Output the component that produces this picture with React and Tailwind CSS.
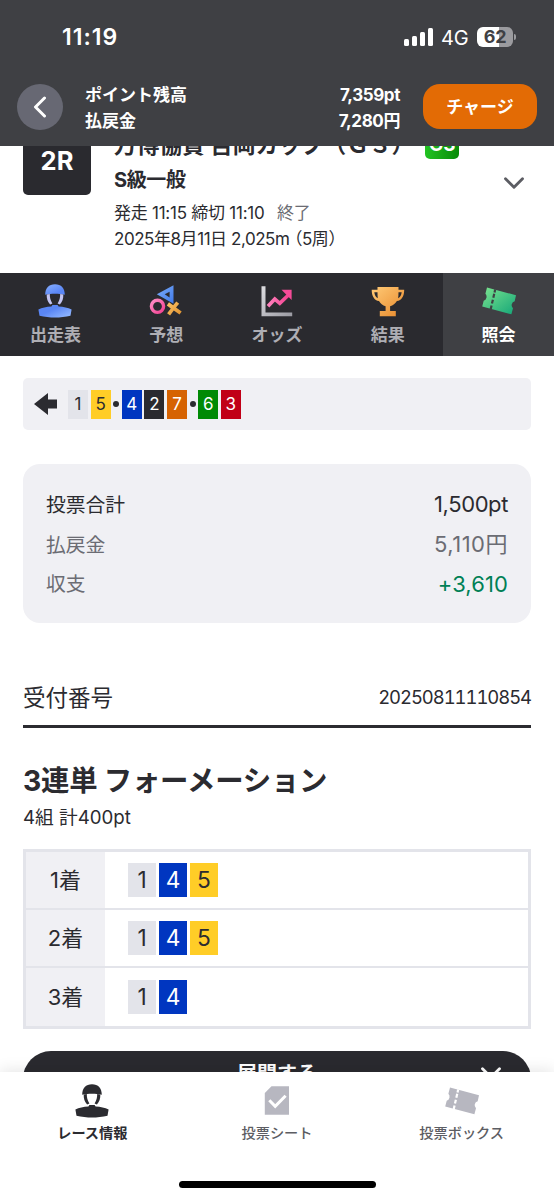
import { ChevronDown } from "lucide-react";

const chipColors = {
  1: "bg-[#e3e4ea] text-[#2b2b30]",
  2: "bg-[#2a2a2f] text-white",
  3: "bg-[#c10017] text-white",
  4: "bg-[#0036c0] text-white",
  5: "bg-[#ffcd27] text-[#2b2b30]",
  6: "bg-[#008a05] text-white",
  7: "bg-[#d66302] text-white",
};

const finishOrder = [1, 5, "dot", 4, 2, 7, "dot", 6, 3];

const formation = [
  { place: "1着", cars: [1, 4, 5] },
  { place: "2着", cars: [1, 4, 5] },
  { place: "3着", cars: [1, 4] },
];

function RiderShape({ body, straps }) {
  return (
    <>
      <path d="M7.2 11.800C7.200 5 10.800 1.200 17 1.200s9.800 3.800 9.800 10.600c-3.400-1-6.200-1-9.800-1s-6.400 0-9.800 1Z" fill={body} />
      <path d="M8.700 11.500 11.800 11c0 3.600.5 6.200 2.600 9.400l-2.300 1C9.600 18.600 8.500 15.500 8.700 11.500ZM25.300 11.500 22.200 11c0 3.600-.5 6.200-2.600 9.400l2.300 1c2.500-2.800 3.600-5.900 3.400-9.900Z" fill={straps} />
      <path d="M.4 26.400C4 24.600 8.500 24 13.400 23.600l1-1.600h5.200l1 1.600c4.900.4 9.400 1 13 2.800l-1.100 6.300C27.500 34.100 22 34.400 17 34.400s-10.500-.3-15.500-1.700L.4 26.400Z" fill={body} />
    </>
  );
}

function RiderIcon() {
  return (
    <svg width="34" height="35" viewBox="0 0 34 35">
      <defs>
        <linearGradient id="rider" gradientUnits="userSpaceOnUse" x1="8" y1="0" x2="24" y2="35">
          <stop offset="0" stopColor="#8bb2ff" />
          <stop offset="0.35" stopColor="#5a86f5" />
          <stop offset="0.7" stopColor="#5a86f5" />
          <stop offset="1" stopColor="#8bb2ff" />
        </linearGradient>
      </defs>
      <RiderShape body="url(#rider)" straps="#c3c4f2" />
    </svg>
  );
}

function PredictIcon() {
  return (
    <svg width="34" height="35" viewBox="0 0 34 35">
      <defs>
        <linearGradient id="tri" x1="0" y1="0" x2="1" y2="1">
          <stop offset="0" stopColor="#7fb0fb" />
          <stop offset="1" stopColor="#3f78e8" />
        </linearGradient>
        <linearGradient id="ring" x1="0" y1="0" x2="1" y2="1">
          <stop offset="0" stopColor="#ff8fc6" />
          <stop offset="1" stopColor="#f23f90" />
        </linearGradient>
        <linearGradient id="cross" x1="0" y1="0" x2="1" y2="1">
          <stop offset="0" stopColor="#ffc66a" />
          <stop offset="1" stopColor="#dd8f2c" />
        </linearGradient>
      </defs>
      <path d="M24.500 2.200v18.600L7.800 11.200 24.500 2.200ZM20.600 8.700l-4.900 2.500 4.900 3.200V8.700Z" fill="url(#tri)" fillRule="evenodd" />
      <circle cx="8.500" cy="23.300" r="6.100" fill="none" stroke="url(#ring)" strokeWidth="3.400" />
      <path d="m20 19.200 4.100 3 3.200-3.800 2.900 2.400-3.200 3.800 5.700 3.900-2.200 3-5.700-3.900-3.700 5-3-2.300 3.700-4.900-4-2.900 2.200-3.300Z" fill="url(#cross)" />
    </svg>
  );
}

function OddsIcon() {
  return (
    <svg width="34" height="35" viewBox="0 0 34 35">
      <defs>
        <linearGradient id="axis" x1="0" y1="0" x2="1" y2="1">
          <stop offset="0" stopColor="#dedee2" />
          <stop offset="1" stopColor="#9a9aa2" />
        </linearGradient>
        <linearGradient id="line" x1="0" y1="0" x2="1" y2="0">
          <stop offset="0" stopColor="#ff82bd" />
          <stop offset="1" stopColor="#f2408f" />
        </linearGradient>
      </defs>
      <path d="M1.500 3.200h4v26.200h26.700v3.800H1.500Z" fill="url(#axis)" />
      <path d="m8 23.300 6.800-7.200 5 4.200 9.200-8.800" fill="none" stroke="url(#line)" strokeWidth="3.700" />
      <path d="M21.500 6.800h10.100V17Z" fill="#f54b98" />
    </svg>
  );
}

function TrophyIcon() {
  return (
    <svg width="34" height="35" viewBox="0 0 34 35">
      <defs>
        <linearGradient id="cup" x1="0" y1="0" x2="1" y2="1">
          <stop offset="0" stopColor="#ffca77" />
          <stop offset="1" stopColor="#e8892b" />
        </linearGradient>
      </defs>
      <path d="M6.500 4h21v2.700h5.700c0 6.500-2.600 10.600-7.300 11.400-1.500 2.700-3.900 4.500-6.800 5.200v4.700h5.700v5.200H8.800v-5.200h5.800v-4.700c-2.900-.7-5.200-2.500-6.600-5.200C3.400 17.300.7 13.200.7 6.700h5.800V4Zm0 5.200H3.300c.4 3 1.500 5 3.500 6-.2-1.800-.3-3.800-.3-6Zm21 0c0 2.200-.1 4.200-.4 6 2.100-1 3.200-3 3.600-6h-3.200Z" fill="url(#cup)" fillRule="evenodd" />
    </svg>
  );
}

function TicketIcon({ fill, gap }) {
  return (
    <svg width="34" height="35" viewBox="0 0 34 35">
      <defs>
        <linearGradient id="ticket" x1="0" y1="0" x2="1" y2="1">
          <stop offset="0" stopColor="#7be38f" />
          <stop offset="1" stopColor="#14a678" />
        </linearGradient>
      </defs>
      <path d="m5 4.600 29 7.600-1.300 6a4.100 4.100 0 0 0-1.700 7l-1.600 6.100L.2 23.600l1.500-5.800a4.300 4.300 0 0 0 1.700-7L5 4.600Z" fill={fill} />
      <path d="M13.200 6.500 8.700 26.200" fill="none" stroke={gap} strokeWidth="2.200" strokeDasharray="3 1.400 4 2 4 2 6" />
    </svg>
  );
}

function SheetIcon() {
  return (
    <svg width="34" height="35" viewBox="0 0 34 35">
      <path d="M11.500 3.200H29v28.600H4.800V10L11.500 3.200Z" fill="#b7b7c0" />
      <path d="m9.300 17.300 5.900 6 10.400-10.600" fill="none" stroke="#fff" strokeWidth="3" />
    </svg>
  );
}

const tabs = [
  { label: "出走表", icon: <RiderIcon /> },
  { label: "予想", icon: <PredictIcon /> },
  { label: "オッズ", icon: <OddsIcon /> },
  { label: "結果", icon: <TrophyIcon /> },
  { label: "照会", icon: <TicketIcon fill="url(#ticket)" gap="#3f4044" />, active: true },
];

function StatusBar() {
  return (
    <div className="flex h-[74px] items-center justify-between pr-[38px] pl-[62px]">
      <span className="pt-px text-[23px] font-semibold tracking-[1px]">11:19</span>
      <div className="flex items-center">
        <div className="flex h-[18px] items-end gap-[3px]">
          <i className="h-[7px] w-[5px] rounded-[1.500px] bg-white" />
          <i className="h-[10px] w-[5px] rounded-[1.500px] bg-white" />
          <i className="h-[14px] w-[5px] rounded-[1.500px] bg-white" />
          <i className="h-[18px] w-[5px] rounded-[1.500px] bg-white" />
        </div>
        <span className="ml-[8px] w-[28px] pt-[2px] text-[20px] tracking-[-0.2px]">4G</span>
        <div className="ml-[8px] flex h-5 w-9 items-center justify-center rounded-[6px] bg-linear-to-r from-white from-62% to-[#9b9b9f] to-62% text-[18px] leading-none font-bold tracking-[-0.3px] text-[#3f4044]">
          62
        </div>
        <i className="ml-px h-[6px] w-[2px] rounded-r-full bg-[#9b9b9f]" />
      </div>
    </div>
  );
}

function Header() {
  return (
    <header className="h-[146px] shrink-0 bg-[#3f4044] text-white">
      <StatusBar />
      <div className="flex h-[65px] items-center pr-[17px] pl-[17px]">
        <button className="flex size-[46px] items-center justify-center rounded-full bg-[#676873]">
          <svg width="14" height="22" viewBox="0 0 14 22" fill="none" stroke="currentColor" strokeWidth="3" strokeLinecap="round" strokeLinejoin="round">
            <path d="M11.500 2 2.500 11l9 9" />
          </svg>
        </button>
        <div className="ml-[22px] flex-1 pt-[2px] text-[17px] leading-[26px] font-bold">
          <div className="flex justify-between">
            <span>ポイント残高</span>
            <span className="tracking-[-0.4px]">7,359pt</span>
          </div>
          <div className="flex justify-between">
            <span>払戻金</span>
            <span className="tracking-[-0.4px]">7,280円</span>
          </div>
        </div>
        <button className="ml-[23px] h-[45px] w-[114px] rounded-[17px] bg-[#e36b05] pt-[2px] text-[17px] font-bold">
          チャージ
        </button>
      </div>
    </header>
  );
}

function RaceInfo() {
  return (
    <section className="flex h-[127px] shrink-0 px-[23px]">
      <div className="-mt-[19px] flex h-[68px] w-[68px] shrink-0 items-center justify-center rounded-[5px] bg-[#2a2a2f] pt-px text-[25.500px] font-bold text-white">
        2R
      </div>
      <div className="-mt-[18px] ml-[23px] flex-1 whitespace-nowrap text-[#2b2b30]">
        <div className="flex h-[34px] items-center">
          <h1 className="text-[22.700px] leading-[34px] font-bold">万博協賛 吉岡カップ（Ｇ３）</h1>
          <span className="ml-[11px] flex h-[28px] w-[34px] items-center justify-center rounded-[5px] bg-linear-to-r from-[#22c322] to-[#078a07] pt-px text-[19px] font-bold text-white">G3</span>
        </div>
        <div className="h-[34px] pt-px text-[20px] leading-[34px] font-bold tracking-[-0.4px]">S級一般</div>
        <div className="mt-[4px] text-[17px] leading-[26px] tracking-[-0.25px]">
          発走 11:15 締切 11:10 <span className="ml-[8px] text-[#6b6c73]">終了</span>
        </div>
        <div className="text-[17px] leading-[26px] tracking-[-0.45px]">
          2025年8月11日 2,025m<span className="-ml-[4px]">（5周）</span>
        </div>
      </div>
      <ChevronDown size={34} strokeWidth={2} className="mt-[20px] -ml-[34px] shrink-0 text-[#5c5d63]" />
    </section>
  );
}

function Tabs() {
  return (
    <nav className="grid h-[83px] shrink-0 grid-cols-5 bg-[#2a2a2f]">
      {tabs.map((tab) => (
        <div
          key={tab.label}
          className={
            tab.active
              ? "flex flex-col items-center bg-[#3f4044] pt-[10px] text-white"
              : "flex flex-col items-center pt-[10px] text-[#aeaeb4]"
          }
        >
          {tab.icon}
          <span className="mt-[4px] text-[17px] leading-[26px] font-bold">{tab.label}</span>
        </div>
      ))}
    </nav>
  );
}

function FinishStrip() {
  return (
    <div className="mx-[23px] mt-[22px] flex h-[52px] shrink-0 items-center rounded-[5px] bg-[#f0f0f4] pl-[11px]">
      <svg width="23" height="23" viewBox="0 0 23 23" fill="#2b2b30">
        <path d="M0 11 14 0v6.400h9v9.200h-9V22Z" />
      </svg>
      <div className="ml-[11px] flex items-center gap-[2.700px] text-[17px]">
        {finishOrder.map((car, i) =>
          car === "dot" ? (
            <i key={i} className="size-[5.700px] rounded-full bg-[#2b2b30]" />
          ) : (
            <span key={i} className={`flex h-[29px] w-[20px] items-center justify-center pt-px ${chipColors[car]}`}>
              {car}
            </span>
          )
        )}
      </div>
    </div>
  );
}

function Summary() {
  return (
    <dl className="mx-[23px] mt-[34px] h-[159px] shrink-0 rounded-[17px] bg-[#f0f0f4] px-[23px] pt-[21px] text-[19.800px] leading-[39.700px] text-[#6b6c73]">
      <div className="flex justify-between text-[#2b2b30]">
        <dt className="pt-px">投票合計</dt>
        <dd className="text-[22px] tracking-[-0.4px]">1,500pt</dd>
      </div>
      <div className="-mt-px flex justify-between">
        <dt className="pt-px">払戻金</dt>
        <dd className="text-[22px] tracking-[0.5px]">5,110円</dd>
      </div>
      <div className="-mt-px flex justify-between">
        <dt className="pt-px">収支</dt>
        <dd className="pt-px text-[22px] tracking-[0.1px] text-[#008055]">+3,610</dd>
      </div>
    </dl>
  );
}

function Receipt() {
  return (
    <section className="mx-[23px] mt-[50px] shrink-0 text-[#2b2b30]">
      <div className="flex h-[55px] items-center justify-between border-b-[3px] border-[#2b2b30] pb-[3px]">
        <span className="text-[22.500px]">受付番号</span>
        <span className="text-[18.500px] tracking-[-1.08px] tabular-nums">20250811110854</span>
      </div>

      <h2 className="mt-[33px] text-[28.400px] leading-[40px] font-bold tracking-[-0.25px]">3連単 フォーメーション</h2>
      <p className="mt-[4px] text-[18.700px] leading-[26px]">4組 計400pt</p>

      <div className="mt-[18px] divide-y-2 divide-[#e3e4ea] border-[3px] border-[#e3e4ea]">
        {formation.map((row) => (
          <div key={row.place} className="flex h-[58px]">
            <div className="flex w-[79px] items-center justify-center bg-[#f0f0f4] text-[22px]">{row.place}</div>
            <div className="flex items-center gap-[3px] pl-[23px] text-[22.700px]">
              {row.cars.map((car) => (
                <span key={car} className={`flex h-[34px] w-[28px] items-center justify-center ${chipColors[car]}`}>
                  {car}
                </span>
              ))}
            </div>
          </div>
        ))}
      </div>

      <button className="relative mt-[22px] flex h-[57px] w-full items-center justify-center rounded-[28px] bg-[#2a2a2f] pb-[12px] text-[20px] font-bold text-white">
        展開する
        <ChevronDown size={34} className="absolute top-[5px] right-[23px]" />
      </button>
    </section>
  );
}

function BottomNav() {
  return (
    <footer className="z-10 h-[128px] shrink-0 bg-white shadow-[0_-2px_14px_rgba(0,0,0,0.1)]">
      <div className="grid h-[109px] grid-cols-3 pt-[11px] text-[14.200px] font-medium text-[#5c5d63]">
        <div className="flex flex-col items-center text-[#2b2b30]">
          <svg width="34" height="35" viewBox="0 0 34 35">
            <RiderShape body="#2b2b30" straps="#2b2b30" />
          </svg>
          <span className="mt-[5px] leading-[20px] font-bold">レース情報</span>
        </div>
        <div className="flex flex-col items-center">
          <SheetIcon />
          <span className="mt-[5px] leading-[20px]">投票シート</span>
        </div>
        <div className="flex flex-col items-center">
          <TicketIcon fill="#b7b7c0" gap="#fff" />
          <span className="mt-[5px] leading-[20px]">投票ボックス</span>
        </div>
      </div>
      <div className="mx-auto h-[7px] w-[197px] rounded-full bg-black" />
    </footer>
  );
}

function App() {
  return (
    <div className="flex h-[1200px] w-[554px] flex-col overflow-hidden bg-white font-['Inter','Noto_Sans_CJK_JP',sans-serif]">
      <Header />
      <main className="flex h-[926px] shrink-0 flex-col overflow-hidden">
        <RaceInfo />
        <Tabs />
        <FinishStrip />
        <Summary />
        <Receipt />
      </main>
      <BottomNav />
    </div>
  );
}

export default App;
